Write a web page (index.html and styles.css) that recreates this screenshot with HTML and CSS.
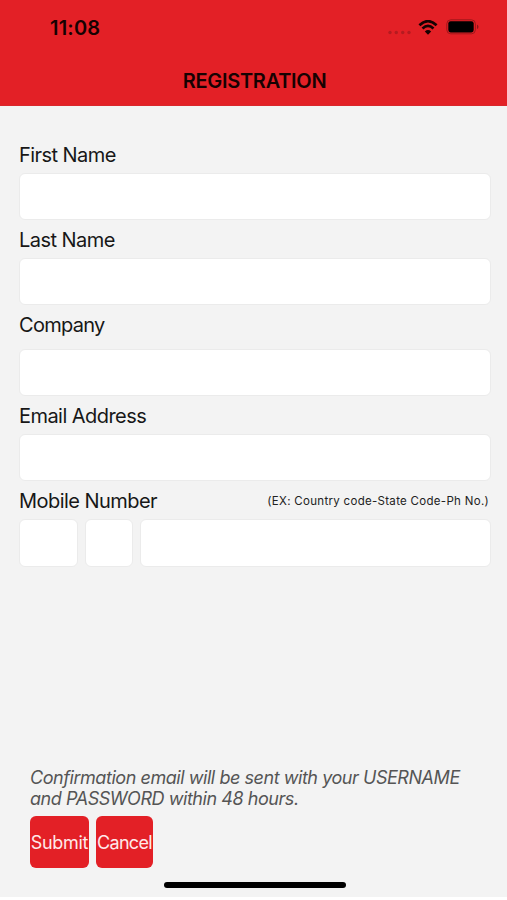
FILE: index.html
```html
<!DOCTYPE html>
<html lang="en">
<head>
<meta charset="utf-8">
<title>Registration</title>
<link rel="stylesheet" href="styles.css">
</head>
<body>
<div class="screen">
  <header class="header">
    <div class="status">
      <span class="time">11:08</span>
      <div class="indicators">
        <svg class="signal" width="24" height="5" viewBox="0 0 24 5"><circle cx="2" cy="2.5" r="1.7"/><circle cx="8.3" cy="2.5" r="1.7"/><circle cx="14.7" cy="2.5" r="1.7"/><circle cx="21" cy="2.5" r="1.7"/></svg>
        <svg class="wifi" width="20" height="16" viewBox="0 0 20 16"><path d="M1.4 5.2Q10-2.8 18.6 5.2M4.5 8.5Q10 3.4 15.5 8.5" fill="none" stroke="#160202" stroke-width="2.7"/><path d="M6.8 11.4Q10 8.6 13.2 11.4L10 14.8Z" fill="#160202"/></svg>
        <svg class="battery" width="33" height="16" viewBox="0 0 33 16"><rect x=".8" y=".8" width="28.6" height="14" rx="4" fill="none" stroke="#9f171b"/><rect x="2.3" y="2.2" width="25.4" height="11.2" rx="2.3"/><path d="M31 5.5Q32.5 6.2 32.5 7.8T31 10.1Z" fill="#8b1518"/></svg>
      </div>
    </div>
    <h1 class="title">REGISTRATION</h1>
  </header>
  <form class="form">
    <label class="label first" for="first">First Name</label>
    <input class="field" id="first">
    <label class="label last" for="last">Last Name</label>
    <input class="field" id="last">
    <label class="label company" for="company">Company</label>
    <input class="field company-field" id="company">
    <label class="label email" for="email">Email Address</label>
    <input class="field" id="email">
    <div class="mobile-heading">
      <label class="label mobile" for="country">Mobile Number</label>
      <span class="hint">(EX: Country code-State Code-Ph No.)</span>
    </div>
    <div class="phone">
      <input class="field" id="country" aria-label="Country code">
      <input class="field" aria-label="State code">
      <input class="field" aria-label="Phone number">
    </div>
    <div class="actions">
      <p class="note">Confirmation email will be sent with your USERNAME<br>and PASSWORD within 48 hours.</p>
      <div class="buttons">
        <button class="button submit" type="button">Submit</button>
        <button class="button cancel" type="button">Cancel</button>
      </div>
    </div>
  </form>
  <div class="home"></div>
</div>
</body>
</html>
```

FILE: styles.css
```css
* { box-sizing: border-box; }
body { margin: 0; background: #fff; font-family: Inter, sans-serif; color: #171717; }
.screen { height: 897px; background: #f3f3f3; display: flex; flex-direction: column; }
.header { height: 106px; background: #e32026; border-bottom: 1px solid #d9272c; color: #160202; flex: none; }
.status { height: 54px; display: flex; justify-content: space-between; padding-left: 50px; padding-right: 28px; }
.time { font-size: 20px; line-height: 24px; margin-top: 16px; font-weight: 600; letter-spacing: .2px; }
.indicators { display: flex; }
.signal { margin-top: 30px; margin-right: 6px; fill: #b51b20; }
.wifi { margin-top: 20px; margin-right: 8px; }
.battery { margin-top: 19px; }
.title { margin: 15px 0 0; padding-left: 2px; text-align: center; font-size: 20px; line-height: 24px; font-weight: 600; letter-spacing: -.28px; }
.form { display: flex; flex-direction: column; padding: 36px 16px 0 19px; flex: 1; }
.label { height: 25px; line-height: 26px; font-size: 20px; white-space: nowrap; letter-spacing: -.55px; }
.company { letter-spacing: -.7px; }
.field { width: 100%; min-width: 0; height: 47px; flex: none; border: 1px solid #ebebeb; border-radius: 6px; background: #fff; margin: 6px 0 7px; padding: 0 10px; font: 20px Inter, sans-serif; outline: 0; }
.company-field { margin-top: 12px; }
.email { line-height: 27px; }
.mobile { line-height: 27px; }
.mobile-heading { display: flex; justify-content: space-between; }
.hint { font-size: 11.5px; line-height: 26px; height: 25px; padding-right: 2px; letter-spacing: .3px; color: #222; white-space: nowrap; }
.phone { display: grid; grid-template-columns: 59px 48px 1fr; gap: 7px; }
.phone .field { height: 48px; }
.actions { margin: auto 0 14px 11px; }
.note { margin: 0 0 7px; font-size: 18px; line-height: 21px; font-style: italic; color: #555; white-space: nowrap; letter-spacing: -.45px; }
.buttons { display: flex; gap: 7px; }
.button { height: 52px; padding: 0; border: 0; border-radius: 6px; background: #e32026; color: #ffe9e9; font: 18px Inter, sans-serif; white-space: nowrap; }
.submit { width: 59px; letter-spacing: -.3px; }
.cancel { width: 57px; letter-spacing: -.65px; }
.home { width: 182px; height: 6px; margin: 0 0 9px 164px; border-radius: 3px; background: #000; flex: none; }
```
